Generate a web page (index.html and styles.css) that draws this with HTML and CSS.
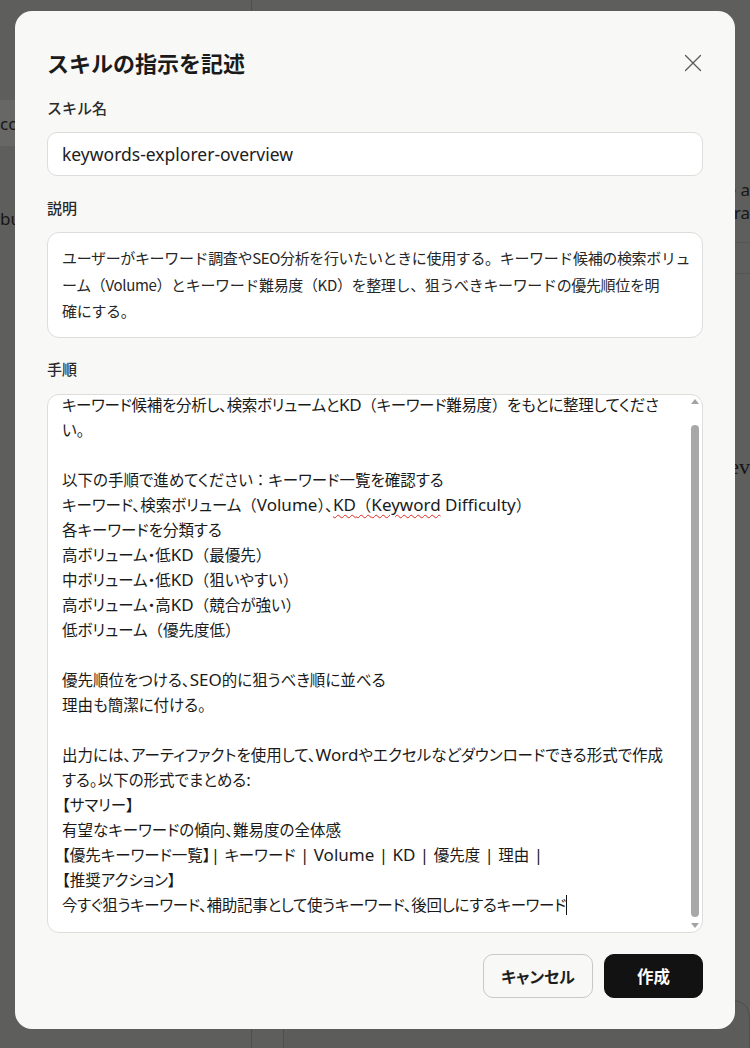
FILE: index.html
```html
<!DOCTYPE html>
<html lang="ja">
<head>
<meta charset="utf-8">
<title>スキルの指示を記述</title>
<link rel="stylesheet" href="styles.css">
</head>
<body>
<div class="page">
  <aside class="side">
    <div class="side-item active">co</div>
    <div class="side-item second">bu</div>
  </aside>
  <main class="main">
    <p class="main-text">e a<br>ra</p>
    <div class="main-row"></div>
    <p class="main-serif">ev</p>
    <div class="main-card"></div>
  </main>
</div>

<div class="overlay">
  <section class="modal" role="dialog" aria-label="スキルの指示を記述">
    <header class="modal-head">
      <h1 class="modal-title">スキルの指示を記述</h1>
      <button class="close" aria-label="閉じる">
        <svg width="18" height="18" viewBox="0 0 18 18" fill="none" stroke="#5a5a5a" stroke-width="1.25" stroke-linecap="round"><path d="M1.5 1.5L16.5 16.5M16.5 1.5L1.5 16.5"/></svg>
      </button>
    </header>

    <label class="label label-first">スキル名</label>
    <div class="input">keywords-explorer-overview</div>

    <label class="label label-second">説明</label>
    <div class="desc">ユーザーがキーワード調査やSEO分析を行いたいときに使用する。キーワード候補の検索ボリュ<br>ーム（Volume）とキーワード難易度（KD）を整理し、狙うべきキーワードの優先順位を明<br>確にする。</div>

    <label class="label label-third">手順</label>
    <div class="area">
      <div class="area-text">
        <div class="area-lines"><span class="tight">キーワード候補を分析し、検索ボリュームと<span class="lt">KD</span><span class="fw">（</span>キーワード難易度<span class="fw">）</span>をもとに整理してくださ</span><br>い。<br><br>以下の手順で進めてください<span class="fw">：</span>キーワード一覧を確認する<br>キーワード、検索ボリューム<span class="fw">（</span><span class="lt">Volume</span><span class="fw">）</span>、<span class="spell"><span class="lt">KD</span><span class="fw">（</span><span class="lt">Keyword</span></span><span class="lt"> Difficulty</span><span class="fw">）</span><br>各キーワードを分類する<br>高ボリューム・低<span class="lt">KD</span><span class="fw">（</span>最優先<span class="fw">）</span><br>中ボリューム・低<span class="lt">KD</span><span class="fw">（</span>狙いやすい<span class="fw">）</span><br>高ボリューム・高<span class="lt">KD</span><span class="fw">（</span>競合が強い<span class="fw">）</span><br>低ボリューム<span class="fw">（</span>優先度低<span class="fw">）</span><br><br>優先順位をつける、<span class="lt">SEO</span>的に狙うべき順に並べる<br>理由も簡潔に付ける。<br><br>出力には、アーティファクトを使用して、<span class="lt">Word</span>やエクセルなどダウンロードできる形式で作成<br>する。以下の形式でまとめる<span class="lt">:</span><br>【サマリー】<br>有望なキーワードの傾向、難易度の全体感<br>【優先キーワード一覧】<span class="lt">| </span>キーワード<span class="lt"> | Volume | KD | </span>優先度<span class="lt"> | </span>理由<span class="lt"> |</span><br>【推奨アクション】<br><span class="tight">今すぐ狙うキーワード、補助記事として使うキーワード、後回しにするキーワード</span><span class="caret"></span></div>
      </div>
      <div class="scrollbar" aria-hidden="true">
        <span class="arrow up"></span>
        <span class="thumb"></span>
        <span class="arrow down"></span>
      </div>
    </div>

    <footer class="actions">
      <button class="btn cancel">キャンセル</button>
      <button class="btn create">作成</button>
    </footer>
  </section>
</div>
</body>
</html>
```

FILE: styles.css
```css
* { box-sizing: border-box; }

html, body {
  margin: 0;
  padding: 0;
  height: 100%;
}

body {
  background: #5e5e5c;
  font-family: "Noto Sans", "Noto Sans CJK JP", sans-serif;
  color: #1f1f1f;
  overflow: hidden;
}

/* ---------- dimmed page behind the dialog ---------- */
.page {
  display: flex;
  height: 100vh;
}

.side {
  width: 252px;
  flex: none;
  border-right: 1px solid #4f4f4d;
  padding-top: 100px;
}

.side-item {
  height: 46px;
  display: flex;
  align-items: center;
  font-size: 17px;
  color: #161616;
  white-space: nowrap;
}

.side-item.active {
  background: #676765;
}

.side-item.second {
  margin-top: 49px;
}

.main {
  flex: 1;
  padding: 178px 0 0 31px;
  overflow: hidden;
}

.main-text {
  margin: 0;
  font-size: 17px;
  line-height: 23px;
  color: #171717;
  text-align: right;
  white-space: nowrap;
}

.main-row {
  margin-top: 18px;
  height: 32px;
  border-top: 1px solid #555553;
  border-bottom: 1px solid #555553;
}

.main-serif {
  margin: 180px 0 0 0;
  font-family: "Liberation Serif", serif;
  font-size: 22px;
  line-height: 26px;
  color: #151515;
  text-align: right;
  white-space: nowrap;
}

.main-card {
  margin-top: 520px;
  height: 120px;
  border: 1px solid #4f4f4d;
  border-radius: 16px;
  background: #5c5c5a;
}

/* ---------- dialog ---------- */
.overlay {
  position: fixed;
  inset: 0;
  display: flex;
  justify-content: center;
  align-items: flex-start;
  padding-top: 11px;
}

.modal {
  width: 720px;
  height: 1018px;
  background: #f8f8f6;
  border-radius: 17px;
  padding: 36px 32px 31px 32px;
  display: flex;
  flex-direction: column;
}

.modal-head {
  height: 32px;
  display: flex;
  align-items: center;
  justify-content: space-between;
  margin-bottom: 18px;
}

.modal-title {
  margin: 0;
  font-size: 22px;
  line-height: 32px;
  font-weight: 700;
  color: #1b1b1b;
}

.close {
  width: 28px;
  height: 28px;
  margin-right: -4px;
  padding: 0;
  border: 0;
  background: transparent;
  display: flex;
  align-items: center;
  justify-content: center;
}

.label {
  display: block;
  font-size: 15px;
  line-height: 22px;
  font-weight: 500;
  color: #2a2a2a;
}

.label-first { margin-bottom: 13px; }
.label-second { margin-top: 21px; margin-bottom: 13px; }
.label-third { margin-top: 20px; margin-bottom: 14px; }

.input {
  height: 44px;
  background: #ffffff;
  border: 1px solid #dddddb;
  border-radius: 10px;
  padding: 0 14px;
  display: flex;
  align-items: center;
  font-size: 17.5px;
  color: #202020;
}

.desc {
  height: 106px;
  background: #ffffff;
  border: 1px solid #dddddb;
  border-radius: 12px;
  padding: 12px 14px 0 14px;
  font-family: "Noto Sans CJK JP", sans-serif;
  font-size: 15px;
  line-height: 26.5px;
  letter-spacing: -0.35px;
  color: #262626;
  white-space: nowrap;
}

.area {
  height: 539px;
  background: #ffffff;
  border: 1px solid #dddddb;
  border-radius: 12px;
  display: flex;
  overflow: hidden;
}

.area-text {
  flex: 1;
  overflow: hidden;
  padding-left: 14px;
}

.area-lines {
  margin-top: -3px;
  font-family: "Noto Sans CJK JP", sans-serif;
  font-size: 15.5px;
  line-height: 25px;
  color: #1a1a1a;
  white-space: nowrap;
  font-feature-settings: "palt" 1;
}

.area-lines .tight {
  letter-spacing: -0.3px;
}

.area-lines .lt {
  font-family: "Noto Sans", sans-serif;
  font-size: 17px;
  font-feature-settings: normal;
}

.area-lines .fw {
  font-feature-settings: normal;
}

.spell {
  text-decoration: underline wavy #e0281f;
  text-decoration-thickness: 1px;
  text-underline-offset: 3px;
}

.caret {
  display: inline-block;
  width: 1px;
  height: 20px;
  background: #111;
  vertical-align: -4px;
}

.scrollbar {
  width: 12px;
  flex: none;
  margin-right: 1px;
  display: flex;
  flex-direction: column;
  align-items: center;
  padding: 4px 0 4px 0;
}

.arrow {
  width: 0;
  height: 0;
  border-left: 4px solid transparent;
  border-right: 4px solid transparent;
}

.arrow.up {
  border-bottom: 5px solid #a3a3a3;
}

.arrow.down {
  border-top: 5px solid #a3a3a3;
}

.thumb {
  width: 8px;
  flex: 1;
  margin: 21px 0 6px 0;
  background: #a8a8a8;
  border-radius: 4px;
}

.actions {
  margin-top: 21px;
  display: flex;
  justify-content: flex-end;
  gap: 11px;
}

.btn {
  height: 44px;
  border-radius: 10px;
  font-family: "Noto Sans CJK JP", sans-serif;
  font-size: 16px;
  font-weight: 700;
  cursor: pointer;
  font-feature-settings: "palt" 1;
}

.btn.cancel {
  width: 110px;
  background: #f8f8f6;
  border: 1px solid #c8c8c6;
  color: #1e1e1e;
}

.btn.create {
  width: 99px;
  background: #121212;
  border: 1px solid #121212;
  color: #ffffff;
  font-size: 16.5px;
}
```
